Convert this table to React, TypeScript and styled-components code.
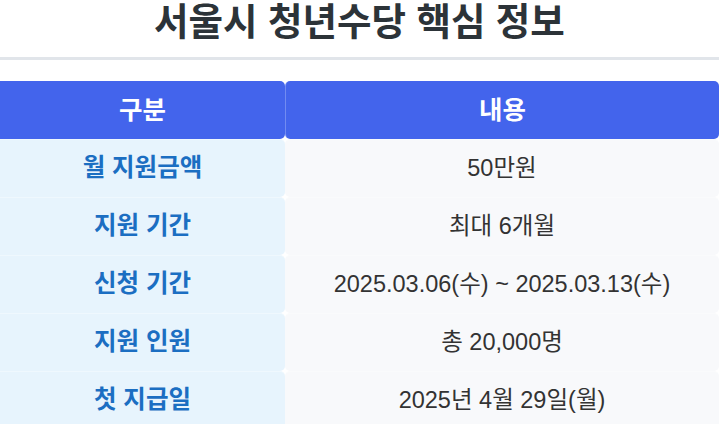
import React from "react";
import styled, { createGlobalStyle } from "styled-components";

const GlobalStyle = createGlobalStyle`
  html, body {
    margin: 0;
    padding: 0;
    background: #ffffff;
    overflow: hidden;
  }
  body {
    font-family: "Liberation Sans", "Noto Sans CJK KR", sans-serif;
  }
`;

const Page = styled.div`
  width: 719px;
`;

const Title = styled.h1`
  margin: 0;
  padding: 2px 0 15px;
  font-size: 37.5px;
  line-height: 40px;
  font-weight: 700;
  color: #2c3338;
  text-align: center;
  border-bottom: 3px solid #e1e5ea;
`;

const Table = styled.table`
  width: 100%;
  margin-top: 21px;
  border-collapse: separate;
  border-spacing: 0;
  table-layout: fixed;
`;

const HeadCell = styled.th<{ $first?: boolean }>`
  width: ${(p) => (p.$first ? "285px" : "auto")};
  height: 58px;
  padding: 0 12px 6px;
  box-sizing: border-box;
  background: #4364ec;
  color: #ffffff;
  font-size: 25.5px;
  font-weight: 700;
  text-align: center;
  border-radius: ${(p) => (p.$first ? "0 5px 5px 0" : "5px")};
  border-left: ${(p) => (p.$first ? "none" : "1px solid rgba(255,255,255,0.25)")};
`;

const Cell = styled.td<{ $label?: boolean }>`
  height: 58px;
  padding: 0 12px 6px;
  box-sizing: border-box;
  font-size: ${(p) => (p.$label ? "24.5px" : "23.5px")};
  text-align: center;
  background: ${(p) => (p.$label ? "#e7f4fd" : "#f8f9fb")};
  color: ${(p) => (p.$label ? "#1b6ec2" : "#333333")};
  font-weight: ${(p) => (p.$label ? 700 : 400)};
  border-radius: ${(p) => (p.$label ? "0 5px 5px 0" : "5px")};
  border-top: 1px solid ${(p) => (p.$label ? "#eff8fe" : "#fafbfc")};
`;

const rows = [
  { label: "월 지원금액", value: "50만원" },
  { label: "지원 기간", value: "최대 6개월" },
  { label: "신청 기간", value: "2025.03.06(수) ~ 2025.03.13(수)" },
  { label: "지원 인원", value: "총 20,000명" },
  { label: "첫 지급일", value: "2025년 4월 29일(월)" },
];

export default function App() {
  return (
    <Page>
      <GlobalStyle />
      <Title>서울시 청년수당 핵심 정보</Title>
      <Table>
        <thead>
          <tr>
            <HeadCell $first>구분</HeadCell>
            <HeadCell>내용</HeadCell>
          </tr>
        </thead>
        <tbody>
          {rows.map((r) => (
            <tr key={r.label}>
              <Cell $label>{r.label}</Cell>
              <Cell>{r.value}</Cell>
            </tr>
          ))}
        </tbody>
      </Table>
    </Page>
  );
}
